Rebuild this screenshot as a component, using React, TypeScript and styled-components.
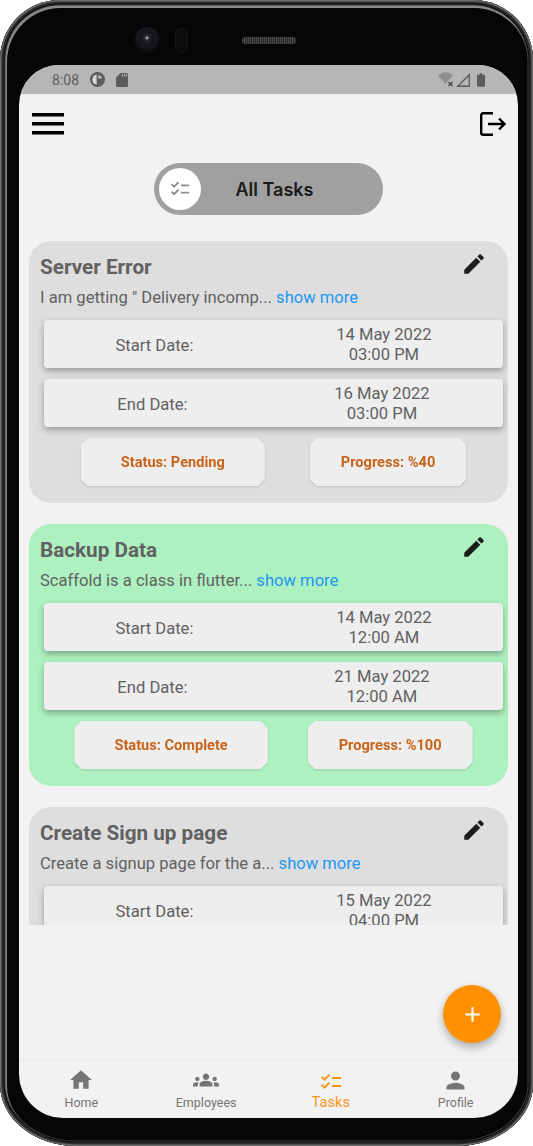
import React from 'react';
import styled, { createGlobalStyle } from 'styled-components';
import { MdChecklist, MdEdit, MdGroups, MdHome, MdPerson, MdAdd } from 'react-icons/md';

const GlobalStyle = createGlobalStyle`
  html, body {
    margin: 0;
    padding: 0;
    background: #ffffff;
    font-family: Roboto, "Liberation Sans", sans-serif;
  }
`;

const Phone = styled.div`
  box-sizing: border-box;
  width: 533px;
  height: 1146px;
  padding: 0 15px 28px 19px;
  display: flex;
  flex-direction: column;
  background: #060608;
  border-radius: 60px 60px 76px 76px / 60px 60px 62px 62px;
  box-shadow:
    inset 0 0 0 1.5px #6e6e6e,
    inset 0 0 0 3.5px #2c2c2c,
    inset 0 0 0 4.5px #0c0c0c,
    inset 0 0 0 5.5px #3a3a3a,
    inset 1px 2px 0 6px #8a8a8a;
  overflow: hidden;
`;

const Bezel = styled.div`
  height: 65px;
  flex: none;
  display: flex;
  align-items: flex-start;
  padding: 27px 0 0 115px;
  box-sizing: border-box;
  gap: 54px;
`;

const Camera = styled.div`
  display: flex;
  align-items: center;
  gap: 15px;
`;

const Lens = styled.div`
  width: 26px;
  height: 26px;
  border-radius: 50%;
  background: radial-gradient(circle at 50% 42%, #a0a0a0 0 1px, #2a2a36 2px, #14141a 6px, #18181c 10px, #0c0c0e 13px);
`;

const Sensor = styled.div`
  box-sizing: border-box;
  width: 13px;
  height: 25px;
  border-radius: 7px;
  border: 1px solid #17171a;
  background: #0b0b0e;
`;

const Speaker = styled.div`
  width: 54px;
  height: 7px;
  margin-top: 10px;
  border-radius: 3px;
  background: repeating-linear-gradient(90deg, #4a4a4c 0 1px, #2a2a2c 1px 2px);
`;

const Screen = styled.div`
  position: relative;
  flex: 1;
  display: flex;
  flex-direction: column;
  background: #f2f2f2;
  border-radius: 40px 40px 44px 44px;
  overflow: hidden;
`;

const StatusBar = styled.div`
  height: 29px;
  flex: none;
  display: flex;
  align-items: center;
  padding: 0 33px 0 33px;
  background: #b6b6b6;
  color: #5c5c5c;
  font-size: 14px;
`;

const StatusLeft = styled.div`
  display: flex;
  align-items: center;
  gap: 11px;
  flex: 1;
`;

const StatusRight = styled.div`
  display: flex;
  align-items: center;
  gap: 2px;
`;

const BatterySlot = styled.div`
  margin-left: 5px;
  display: flex;
`;

const Toolbar = styled.div`
  box-sizing: border-box;
  height: 58px;
  flex: none;
  display: flex;
  align-items: center;
  justify-content: space-between;
  padding: 2px 12px 0 13px;
`;

const ToggleRow = styled.div`
  display: flex;
  justify-content: center;
  flex: none;
  padding: 11px 0 26px;
`;

const Toggle = styled.div`
  box-sizing: border-box;
  width: 229px;
  height: 52px;
  padding: 5px;
  display: flex;
  align-items: center;
  border-radius: 26px;
  background: #a0a0a0;
`;

const Knob = styled.div`
  width: 42px;
  height: 42px;
  flex: none;
  display: flex;
  align-items: center;
  justify-content: center;
  border-radius: 50%;
  background: #ffffff;
  color: #8c8c8c;
`;

const ToggleLabel = styled.div`
  flex: 1;
  padding-right: 30px;
  text-align: center;
  font-family: Inter, Roboto, sans-serif;
  font-size: 18px;
  font-weight: 600;
  color: #1a1a1a;
`;

const TaskList = styled.div`
  height: 684px;
  flex: none;
  overflow: hidden;
  display: flex;
  flex-direction: column;
  gap: 21px;
  padding: 0 10px;
`;

const Card = styled.div<{ $done: boolean }>`
  flex: none;
  box-sizing: border-box;
  height: 262px;
  padding: 10px 5px 0 15px;
  border-radius: 22px;
  background: ${({ $done }) => ($done ? '#aef1c0' : '#dedede')};
`;

const CardHeader = styled.div`
  display: flex;
  align-items: center;
  justify-content: space-between;
  height: 30px;
  margin-left: -4px;
  padding-right: 16px;
`;

const Title = styled.div`
  padding-top: 2px;
  font-size: 20.7px;
  font-weight: 700;
  color: #616161;
`;

const EditButton = styled.div`
  display: flex;
  margin-bottom: 4px;
  color: #1c1c1c;
`;

const Description = styled.div`
  margin: 6px 0 11px -4px;
  height: 22px;
  line-height: 22px;
  font-size: 16.6px;
  white-space: nowrap;
  color: #616161;
`;

const ShowMore = styled.span`
  color: #2196f3;
`;

const DateBox = styled.div`
  box-sizing: border-box;
  display: flex;
  align-items: center;
  justify-content: space-around;
  height: 48px;
  padding-top: 2px;
  margin-bottom: 11px;
  border-radius: 4px;
  background: #eeeeee;
  box-shadow: 0 3px 6px rgba(0, 0, 0, 0.3);
  font-size: 16.6px;
  color: #616161;
`;

const DateValue = styled.div`
  text-align: center;
  line-height: 20px;
`;

const PillRow = styled.div<{ $gap: number }>`
  display: flex;
  justify-content: center;
  gap: ${({ $gap }) => $gap}px;
  filter: drop-shadow(0 1px 1px rgba(0, 0, 0, 0.14));
`;

const Pill = styled.div<{ $pad: number }>`
  height: 48px;
  display: flex;
  align-items: center;
  padding: 0 ${({ $pad }) => $pad}px;
  background: #eeeeee;
  font-size: 14.6px;
  font-weight: 700;
  color: #c8651b;
  clip-path: polygon(7px 0, calc(100% - 7px) 0, 100% 7px, 100% calc(100% - 7px), calc(100% - 7px) 100%, 7px 100%, 0 calc(100% - 7px), 0 7px);
`;

const Fab = styled.div`
  position: absolute;
  right: 17px;
  bottom: 75px;
  width: 58px;
  height: 58px;
  display: flex;
  align-items: center;
  justify-content: center;
  border-radius: 50%;
  background: #ff9100;
  color: #ffffff;
  box-shadow: 0 4px 8px rgba(0, 0, 0, 0.3);
`;

const BottomNav = styled.div`
  margin-top: auto;
  height: 59px;
  box-sizing: border-box;
  flex: none;
  display: flex;
  border-top: 1px solid #e8e8e8;
`;

const NavItem = styled.div<{ $active?: boolean }>`
  flex: 1;
  display: flex;
  flex-direction: column;
  align-items: center;
  padding-top: ${({ $active }) => ($active ? 10 : 7)}px;
  font-size: ${({ $active }) => ($active ? 14.7 : 12.5)}px;
  line-height: 16px;
  color: ${({ $active }) => ($active ? '#f7941d' : '#757575')};
`;

const NavIcon = styled.div<{ $active?: boolean }>`
  height: ${({ $active }) => ($active ? 24 : 26)}px;
  display: flex;
  align-items: center;
  margin-bottom: ${({ $active }) => ($active ? 0 : 2)}px;
`;

interface Task {
  title: string;
  text: string;
  start: string[];
  end?: string[];
  status?: string;
  progress?: number;
  done: boolean;
}

// the third card runs under the fold, only its start date is visible
const tasks: Task[] = [
  {
    title: 'Server Error',
    text: 'I am getting " Delivery incomp...',
    start: ['14 May 2022', '03:00 PM'],
    end: ['16 May 2022', '03:00 PM'],
    status: 'Pending',
    progress: 40,
    done: false,
  },
  {
    title: 'Backup Data',
    text: 'Scaffold is a class in flutter...',
    start: ['14 May 2022', '12:00 AM'],
    end: ['21 May 2022', '12:00 AM'],
    status: 'Complete',
    progress: 100,
    done: true,
  },
  {
    title: 'Create Sign up page',
    text: 'Create a signup page for the a...',
    start: ['15 May 2022', '04:00 PM'],
    done: false,
  },
];

const MenuIcon = () => (
  <svg width="32" height="22" viewBox="0 0 32 22" fill="#000">
    <rect y="0" width="32" height="3.5" />
    <rect y="9" width="32" height="3.5" />
    <rect y="18" width="32" height="3.5" />
  </svg>
);

const LogoutIcon = () => (
  <svg width="26" height="24" viewBox="0 0 26 24" fill="none" stroke="#000" strokeWidth="2.4">
    <path d="M13 1.2H3.2a2 2 0 0 0-2 2v17.6a2 2 0 0 0 2 2H13" />
    <path d="M8 12h16.5M19 6.5l5.5 5.5-5.5 5.5" />
  </svg>
);

const DataSaverIcon = () => (
  <svg width="15" height="15" viewBox="0 0 15 15">
    <circle cx="7.5" cy="7.5" r="7.5" fill="#5c5c5c" />
    <path d="M6.6 2.4A5.2 5.2 0 0 0 6.6 12.6z" fill="#d8d8d8" />
    <path d="M8.4 3v3.6H12A4.4 4.4 0 0 0 8.4 3z" fill="#c8c8c8" />
  </svg>
);

const SdIcon = () => (
  <svg width="12" height="14" viewBox="0 0 12 14" fill="#5c5c5c">
    <path d="M4.5 0H10.5A1.5 1.5 0 0 1 12 1.5V12.5A1.5 1.5 0 0 1 10.5 14H1.5A1.5 1.5 0 0 1 0 12.5V4.5zM6 1v2.5h1V1zM8 1v2.5h1V1zM10 1v2.5h1V1z" fillRule="evenodd" />
  </svg>
);

const WifiOffIcon = () => (
  <svg width="16" height="15" viewBox="0 0 16 15">
    <path d="M0 3.5C4-1 11-1 15 3.5L7.5 12z" fill="#8f8f8f" />
    <path d="M10.5 10l4 4m0-4l-4 4" stroke="#444" strokeWidth="1.4" />
  </svg>
);

const SignalIcon = () => (
  <svg width="14" height="14" viewBox="0 0 14 14">
    <path d="M14 0V14H0zM12.6 3.4 3.4 12.6H12.6z" fill="#5c5c5c" fillRule="evenodd" />
  </svg>
);

const BatteryIcon = () => (
  <svg width="8" height="14" viewBox="0 0 9 15" fill="#5c5c5c">
    <path d="M3 0H6V1.5H8A1 1 0 0 1 9 2.5V14A1 1 0 0 1 8 15H1A1 1 0 0 1 0 14V2.5A1 1 0 0 1 1 1.5H3z" />
  </svg>
);

const App: React.FC = () => (
  <>
    <GlobalStyle />
    <Phone>
      <Bezel>
        <Camera>
          <Lens />
          <Sensor />
        </Camera>
        <Speaker />
      </Bezel>
      <Screen>
        <StatusBar>
          <StatusLeft>
            <span>8:08</span>
            <DataSaverIcon />
            <SdIcon />
          </StatusLeft>
          <StatusRight>
            <WifiOffIcon />
            <SignalIcon />
            <BatterySlot>
              <BatteryIcon />
            </BatterySlot>
          </StatusRight>
        </StatusBar>
        <Toolbar>
          <MenuIcon />
          <LogoutIcon />
        </Toolbar>
        <ToggleRow>
          <Toggle>
            <Knob>
              <MdChecklist size={22} />
            </Knob>
            <ToggleLabel>All Tasks</ToggleLabel>
          </Toggle>
        </ToggleRow>
        <TaskList>
          {tasks.map((task) => (
            <Card key={task.title} $done={task.done}>
              <CardHeader>
                <Title>{task.title}</Title>
                <EditButton>
                  <MdEdit size={26} />
                </EditButton>
              </CardHeader>
              <Description>
                {task.text} <ShowMore>show more</ShowMore>
              </Description>
              <DateBox>
                <div>Start Date:</div>
                <DateValue>
                  {task.start[0]}
                  <br />
                  {task.start[1]}
                </DateValue>
              </DateBox>
              {task.end && (
                <DateBox>
                  <div>End Date:</div>
                  <DateValue>
                    {task.end[0]}
                    <br />
                    {task.end[1]}
                  </DateValue>
                </DateBox>
              )}
              {task.status && (
                <PillRow $gap={task.done ? 40 : 45}>
                  <Pill $pad={40}>Status: {task.status}</Pill>
                  <Pill $pad={31}>Progress: %{task.progress}</Pill>
                </PillRow>
              )}
            </Card>
          ))}
        </TaskList>
        <BottomNav>
          <NavItem>
            <NavIcon>
              <MdHome size={26} />
            </NavIcon>
            <div>Home</div>
          </NavItem>
          <NavItem>
            <NavIcon>
              <MdGroups size={26} />
            </NavIcon>
            <div>Employees</div>
          </NavItem>
          <NavItem $active>
            <NavIcon $active>
              <MdChecklist size={24} />
            </NavIcon>
            <div>Tasks</div>
          </NavItem>
          <NavItem>
            <NavIcon>
              <MdPerson size={27} />
            </NavIcon>
            <div>Profile</div>
          </NavItem>
        </BottomNav>
        <Fab>
          <MdAdd size={25} />
        </Fab>
      </Screen>
    </Phone>
  </>
);

export default App;
